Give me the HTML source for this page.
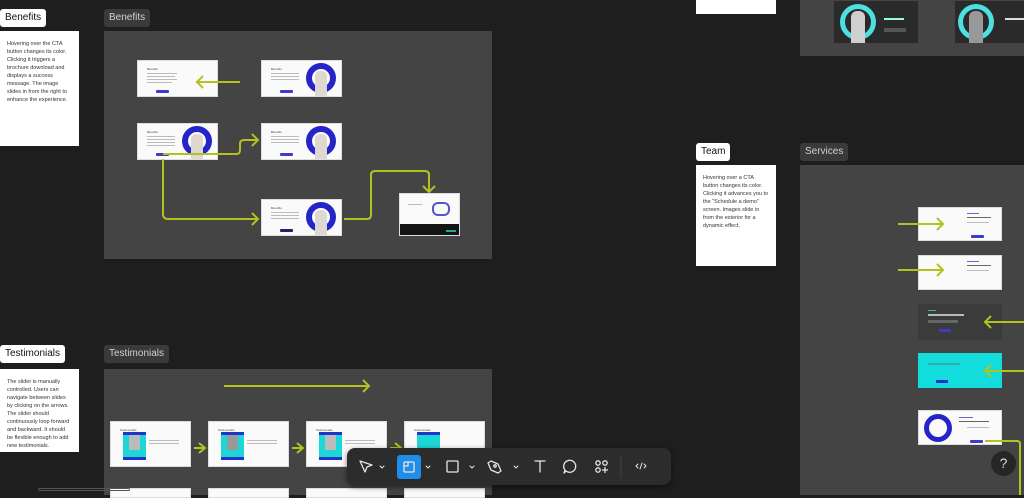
<!DOCTYPE html>
<html><head><meta charset="utf-8"><style>
*{margin:0;padding:0;box-sizing:border-box}
body{width:1024px;height:495px;background:#1e1e1e;position:relative;overflow:hidden;font-family:"Liberation Sans",sans-serif}
.a{position:absolute}
.pill{position:absolute;background:#fff;color:#111;font-size:10px;font-weight:500;padding:0 5px;height:18px;line-height:18px;border-radius:3px}
.fl{position:absolute;background:#3a3a3a;color:#d0d0d0;font-size:10px;font-weight:500;height:18px;line-height:18px;padding:0 5px;border-radius:3px}
.note{position:absolute;background:#fff;color:#333;font-size:5.5px;line-height:8px;padding:9px 7px}
.frame{position:absolute;background:#444}
.th{position:absolute;background:#fafafa;border:1px solid #ddd;overflow:hidden}
.th .t{position:absolute;left:9px;top:6px;font-size:3px;color:#444}
.th .l{position:absolute;left:9px;height:1px;background:#bbb}
.th .b{position:absolute;height:3px;width:13px;background:#3c3cc8;border-radius:1px}
.th .c{position:absolute;border-radius:50%;border:6px solid #2424c8}
.th .p{position:absolute;background:#ddd8d0;border-radius:5px 5px 0 0}
</style></head><body>

<div class="pill" style="left:0;top:9px">Benefits</div>
<div class="note" style="left:0;top:31px;width:79px;height:115px">Hovering over the CTA button changes its color. Clicking it triggers a brochure download and displays a success message. The image slides in from the right to enhance the experience.</div>
<div class="fl" style="left:104px;top:9px">Benefits</div>
<div class="frame" style="left:104px;top:31px;width:388px;height:228px"></div>

<div class="th" style="left:137px;top:60px;width:81px;height:37px"><div class="t">Benefits</div><div class="l" style="top:12px;width:30px"></div><div class="l" style="top:15px;width:28px"></div><div class="l" style="top:18px;width:30px"></div><div class="l" style="top:21px;width:25px"></div><div class="b" style="left:18px;top:29px"></div></div>
<div class="th" style="left:261px;top:60px;width:81px;height:37px"><div class="t">Benefits</div><div class="l" style="top:12px;width:28px"></div><div class="l" style="top:15px;width:28px"></div><div class="l" style="top:18px;width:28px"></div><div class="b" style="left:18px;top:29px"></div><div class="c" style="left:44px;top:2px;width:30px;height:30px"></div><div class="p" style="left:53px;top:10px;width:12px;height:27px"></div></div>
<div class="th" style="left:137px;top:123px;width:81px;height:37px"><div class="t">Benefits</div><div class="l" style="top:12px;width:28px"></div><div class="l" style="top:15px;width:28px"></div><div class="l" style="top:18px;width:28px"></div><div class="l" style="top:21px;width:28px"></div><div class="b" style="left:18px;top:29px"></div><div class="c" style="left:44px;top:2px;width:30px;height:30px"></div><div class="p" style="left:53px;top:10px;width:12px;height:27px"></div></div>
<div class="th" style="left:261px;top:123px;width:81px;height:37px"><div class="t">Benefits</div><div class="l" style="top:12px;width:28px"></div><div class="l" style="top:15px;width:28px"></div><div class="l" style="top:18px;width:28px"></div><div class="b" style="left:18px;top:29px"></div><div class="c" style="left:44px;top:2px;width:30px;height:30px"></div><div class="p" style="left:53px;top:10px;width:12px;height:27px"></div></div>
<div class="th" style="left:261px;top:199px;width:81px;height:37px"><div class="t">Benefits</div><div class="l" style="top:12px;width:28px"></div><div class="l" style="top:15px;width:28px"></div><div class="l" style="top:18px;width:28px"></div><div class="b" style="left:18px;top:29px;background:#222266"></div><div class="c" style="left:44px;top:2px;width:30px;height:30px"></div><div class="p" style="left:53px;top:10px;width:12px;height:27px"></div></div>
<div class="th" style="left:399px;top:193px;width:61px;height:43px"><div class="l" style="top:10px;left:8px;width:14px"></div><div class="c" style="left:32px;top:8px;width:18px;height:14px;border-width:2px;border-radius:6px;border-color:#5555cc"></div><div class="a" style="left:0;top:30px;width:61px;height:13px;background:#151515"></div><div class="a" style="left:46px;top:36px;width:10px;height:2px;background:#2a9"></div></div>

<div class="pill" style="left:0;top:345px">Testimonials</div>
<div class="note" style="left:0;top:369px;width:79px;height:83px">The slider is manually controlled. Users can navigate between slides by clicking on the arrows. The slider should continuously loop forward and backward. It should be flexible enough to add new testimonials.</div>
<div class="fl" style="left:104px;top:345px">Testimonials</div>
<div class="frame" style="left:104px;top:369px;width:388px;height:126px"></div>

<div class="th" style="left:110px;top:421px;width:81px;height:46px"><div class="t">Testimonials</div><div class="a" style="left:12px;top:10px;width:23px;height:28px;background:#1dd6d6;border-top:3px solid #2233cc;border-bottom:3px solid #2233cc"></div><div class="a" style="left:18px;top:13px;width:11px;height:15px;background:#bbb"></div><div class="l" style="left:38px;top:18px;width:30px"></div><div class="l" style="left:38px;top:21px;width:30px"></div></div>
<div class="th" style="left:208px;top:421px;width:81px;height:46px"><div class="t">Testimonials</div><div class="a" style="left:12px;top:10px;width:23px;height:28px;background:#1dd6d6;border-top:3px solid #2233cc;border-bottom:3px solid #2233cc"></div><div class="a" style="left:18px;top:13px;width:11px;height:15px;background:#999"></div><div class="l" style="left:38px;top:18px;width:30px"></div><div class="l" style="left:38px;top:21px;width:30px"></div></div>
<div class="th" style="left:306px;top:421px;width:81px;height:46px"><div class="t">Testimonials</div><div class="a" style="left:12px;top:10px;width:23px;height:28px;background:#1dd6d6;border-top:3px solid #2233cc;border-bottom:3px solid #2233cc"></div><div class="a" style="left:18px;top:13px;width:11px;height:15px;background:#bbb"></div><div class="l" style="left:38px;top:18px;width:30px"></div><div class="l" style="left:38px;top:21px;width:30px"></div></div>
<div class="th" style="left:404px;top:421px;width:81px;height:46px"><div class="t">Testimonials</div><div class="a" style="left:12px;top:10px;width:23px;height:28px;background:#1dd6d6;border-top:3px solid #2233cc;border-bottom:3px solid #2233cc"></div></div>
<div class="th" style="left:110px;top:488px;width:81px;height:10px"></div>
<div class="th" style="left:208px;top:488px;width:81px;height:10px"></div>
<div class="th" style="left:306px;top:488px;width:81px;height:10px"></div>
<div class="th" style="left:404px;top:488px;width:81px;height:10px"></div>

<div class="note" style="left:696px;top:0;width:80px;height:14px;padding:0"></div>
<div class="frame" style="left:800px;top:0;width:224px;height:56px"></div>
<div class="a" style="left:834px;top:1px;width:84px;height:42px;background:#2a2a2a"><div class="a" style="left:6px;top:3px;width:36px;height:36px;border-radius:50%;border:5px solid #4de0e0"></div><div class="a" style="left:17px;top:10px;width:14px;height:32px;background:#cfcfcf;border-radius:6px 6px 0 0"></div><div class="a" style="left:50px;top:17px;width:20px;height:2px;background:#9fc"></div><div class="a" style="left:50px;top:27px;width:22px;height:4px;background:#555"></div></div>
<div class="a" style="left:955px;top:1px;width:69px;height:42px;background:#2a2a2a"><div class="a" style="left:3px;top:3px;width:36px;height:36px;border-radius:50%;border:5px solid #4de0e0"></div><div class="a" style="left:14px;top:10px;width:14px;height:32px;background:#999;border-radius:6px 6px 0 0"></div><div class="a" style="left:50px;top:17px;width:19px;height:2px;background:#ddd"></div></div>

<div class="pill" style="left:696px;top:143px">Team</div>
<div class="note" style="left:696px;top:165px;width:80px;height:101px">Hovering over a CTA button changes its color. Clicking it advances you to the "Schedule a demo" screen. Images slide in from the exterior for a dynamic effect.</div>
<div class="fl" style="left:800px;top:143px">Services</div>
<div class="frame" style="left:800px;top:165px;width:224px;height:330px"></div>
<div class="th" style="left:918px;top:207px;width:84px;height:34px"><div class="l" style="left:48px;top:5px;width:12px;background:#66c"></div><div class="l" style="left:48px;top:9px;width:24px;background:#666"></div><div class="l" style="left:48px;top:14px;width:22px"></div><div class="b" style="left:52px;top:27px"></div></div>
<div class="th" style="left:918px;top:255px;width:84px;height:35px"><div class="l" style="left:48px;top:5px;width:12px;background:#66c"></div><div class="l" style="left:48px;top:9px;width:24px;background:#666"></div><div class="l" style="left:48px;top:14px;width:22px"></div></div>
<div class="a" style="left:918px;top:304px;width:84px;height:36px;background:#3b3b3b"><div class="a" style="left:10px;top:6px;width:8px;height:1px;background:#2c9"></div><div class="a" style="left:10px;top:10px;width:36px;height:2px;background:#bbb"></div><div class="a" style="left:10px;top:16px;width:30px;height:3px;background:#666"></div><div class="a" style="left:21px;top:25px;width:12px;height:3px;background:#3c3cc8"></div></div>
<div class="a" style="left:918px;top:353px;width:84px;height:35px;background:#12dcdc"><div class="a" style="left:10px;top:10px;width:32px;height:2px;background:#3aa"></div><div class="a" style="left:18px;top:27px;width:12px;height:3px;background:#2233cc"></div></div>
<div class="th" style="left:918px;top:410px;width:84px;height:35px"><div class="c" style="left:5px;top:3px;width:28px;height:28px;border-width:5px"></div><div class="l" style="left:40px;top:6px;width:14px;background:#66c"></div><div class="l" style="left:40px;top:10px;width:30px;background:#666"></div><div class="l" style="left:48px;top:16px;width:22px"></div><div class="b" style="left:51px;top:29px"></div></div>

<svg class="a" style="left:0;top:0" width="1024" height="495" fill="none" stroke="#b4c21f" stroke-width="2">
<path d="M240 82H196M203 76l-6 6 6 6"/>
<path d="M163 154H236q4 0 4-4v-6q0-4 4-4H258M252 134l6 6-6 6"/>
<path d="M163 159V214q0 5 5 5H258M252 213l6 6-6 6"/>
<path d="M344 219H367q4 0 4-4V175q0-4 4-4H425q4 0 4 4V191M423 186l6 6 6-6"/>
<path d="M224 386H369M363 380l6 6-6 6"/>
<path d="M194 448H205M199 443l6 5-6 5M292 448H303M297 443l6 5-6 5M390 448H401M395 443l6 5-6 5"/>
<path d="M898 224H943M937 218l6 6-6 6M898 270H943M937 264l6 6-6 6"/>
<path d="M1024 322H985M991 316l-6 6 6 6M1024 371H985M991 365l-6 6 6 6"/>
<path d="M985 441H1017q3 0 3 3V495"/>
</svg>

<div class="a" style="left:38px;top:488px;width:92px;height:3px;border:1px solid #555;border-radius:2px"></div>

<div class="a" style="left:991px;top:451px;width:25px;height:25px;border-radius:50%;background:#262626;color:#ddd;font-size:14px;text-align:center;line-height:25px">?</div>

<div class="a" style="left:347px;top:448px;width:324px;height:37px;background:#2c2c2c;border-radius:8px;box-shadow:0 2px 6px rgba(0,0,0,.5)">
<svg class="a" style="left:0;top:0" width="324" height="37" fill="none" stroke="#e6e6e6" stroke-width="1.3" stroke-linejoin="round" stroke-linecap="round">
<path d="M13 13l12 4-5 2-2 5z"/>
<path d="M33 18l2 2 2-2" stroke-width="1"/>
<rect x="50" y="7" width="24" height="24" rx="3" fill="#1e8ee8" stroke="none"/>
<rect x="57" y="14" width="10" height="10" rx="1"/><path d="M57 18h4v-4"/>
<path d="M79 18l2 2 2-2" stroke-width="1"/>
<rect x="100" y="13" width="11" height="11" rx="1"/>
<path d="M123 18l2 2 2-2" stroke-width="1"/>
<path d="M144 13l7 3 3 7-3 2-7-3-3-7z"/><circle cx="148" cy="18" r="1.2"/>
<path d="M167 18l2 2 2-2" stroke-width="1"/>
<path d="M188 13h10M193 13v11"/>
<path d="M219 23l-2 2 1-3a6 6 0 1 1 1 1z"/>
<circle cx="251" cy="15" r="2.2"/><circle cx="258" cy="15" r="2.2"/><circle cx="251" cy="22" r="2.2"/><path d="M258 19.5v5M255.5 22h5"/>
<path d="M274 8v22" stroke="#3e3e3e"/>
<path d="M291 16l-2 2 2 2M297 16l2 2-2 2M295 15l-2 6" stroke-width="1"/>
</svg>
</div>
</body></html>
